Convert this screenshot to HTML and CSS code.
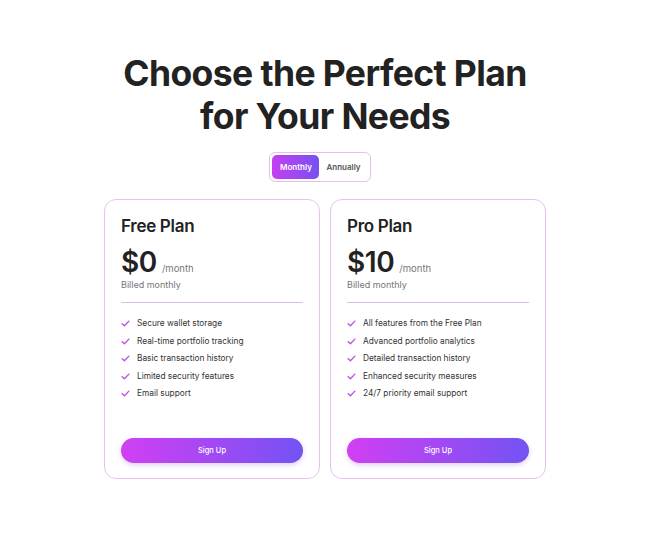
FILE: index.html
```html
<!DOCTYPE html>
<html>
<head>
<meta charset="utf-8">
<link rel="stylesheet" href="styles.css">
</head>
<body>
<main class="page">
  <h1 class="title">Choose the Perfect Plan<br>for Your Needs</h1>
  <div class="toggle">
    <span class="toggle-btn active">Monthly</span>
    <span class="toggle-btn">Annually</span>
  </div>
  <div class="cards">
    <section class="card">
      <h2 class="plan-name">Free Plan</h2>
      <div class="price-row"><span class="price">$0</span><span class="per">/month</span></div>
      <div class="billed">Billed monthly</div>
      <hr class="divider">
      <ul class="features">
        <li><svg class="check" viewBox="0 0 12 12"><path d="M1.5 6.2 L4.6 9 L10.5 2.8"/></svg>Secure wallet storage</li>
        <li><svg class="check" viewBox="0 0 12 12"><path d="M1.5 6.2 L4.6 9 L10.5 2.8"/></svg>Real-time portfolio tracking</li>
        <li><svg class="check" viewBox="0 0 12 12"><path d="M1.5 6.2 L4.6 9 L10.5 2.8"/></svg>Basic transaction history</li>
        <li><svg class="check" viewBox="0 0 12 12"><path d="M1.5 6.2 L4.6 9 L10.5 2.8"/></svg>Limited security features</li>
        <li><svg class="check" viewBox="0 0 12 12"><path d="M1.5 6.2 L4.6 9 L10.5 2.8"/></svg>Email support</li>
      </ul>
      <button class="signup">Sign Up</button>
    </section>
    <section class="card">
      <h2 class="plan-name">Pro Plan</h2>
      <div class="price-row"><span class="price">$10</span><span class="per">/month</span></div>
      <div class="billed">Billed monthly</div>
      <hr class="divider">
      <ul class="features">
        <li><svg class="check" viewBox="0 0 12 12"><path d="M1.5 6.2 L4.6 9 L10.5 2.8"/></svg>All features from the Free Plan</li>
        <li><svg class="check" viewBox="0 0 12 12"><path d="M1.5 6.2 L4.6 9 L10.5 2.8"/></svg>Advanced portfolio analytics</li>
        <li><svg class="check" viewBox="0 0 12 12"><path d="M1.5 6.2 L4.6 9 L10.5 2.8"/></svg>Detailed transaction history</li>
        <li><svg class="check" viewBox="0 0 12 12"><path d="M1.5 6.2 L4.6 9 L10.5 2.8"/></svg>Enhanced security measures</li>
        <li><svg class="check" viewBox="0 0 12 12"><path d="M1.5 6.2 L4.6 9 L10.5 2.8"/></svg>24/7 priority email support</li>
      </ul>
      <button class="signup">Sign Up</button>
    </section>
  </div>
</main>
</body>
</html>
```

FILE: styles.css
```css
html, body {
  margin: 0;
  padding: 0;
  background: #ffffff;
}
body {
  font-family: Inter, "Noto Sans", sans-serif;
  color: #222222;
}
.page {
  display: flex;
  flex-direction: column;
  align-items: center;
  padding-top: 52px;
}
.title {
  margin: 0;
  font-size: 35.5px;
  line-height: 43px;
  font-weight: 700;
  letter-spacing: -0.6px;
  text-align: center;
  color: #222222;
}
.toggle {
  margin-top: 14px;
  margin-right: 10px;
  display: flex;
  gap: 0;
  padding: 2px;
  border: 1px solid #e6bdee;
  border-radius: 6px;
  background: #fff;
}
.toggle-btn {
  display: flex;
  align-items: center;
  justify-content: center;
  height: 24px;
  padding: 0 7px;
  font-size: 8px;
  font-weight: 600;
  color: #555;
  border-radius: 5px;
}
.toggle-btn.active {
  background: linear-gradient(90deg, #c53ff2, #7552f2);
  color: #fff;
  width: 33px;
}
.cards {
  margin-top: 17px;
  display: flex;
  gap: 10px;
}
.card {
  width: 182px;
  height: 247px;
  padding: 16px 16px 15px 16px;
  border: 1px solid #e3c3ec;
  border-radius: 12px;
  display: flex;
  flex-direction: column;
  background: #fff;
}
.plan-name {
  margin: 0;
  font-size: 17px;
  line-height: 20px;
  font-weight: 600;
  letter-spacing: -0.3px;
  color: #222;
}
.price-row {
  margin-top: 9px;
  display: flex;
  align-items: baseline;
  gap: 5px;
}
.price {
  font-size: 28px;
  line-height: 34px;
  font-weight: 600;
  letter-spacing: -0.4px;
  color: #222;
}
.per {
  font-size: 9.5px;
  color: #777;
}
.billed {
  margin-top: 0;
  font-size: 9px;
  color: #777;
}
.divider {
  margin: 12px 0 0 0;
  border: 0;
  border-top: 1px solid #d9bde6;
}
.features {
  list-style: none;
  margin: 15px 0 0 0;
  padding: 0;
  display: flex;
  flex-direction: column;
  gap: 6.5px;
}
.features li {
  display: flex;
  align-items: center;
  gap: 7px;
  font-size: 8.3px;
  line-height: 11px;
  color: #333;
}
.check {
  width: 9px;
  height: 9px;
  fill: none;
  stroke: #c04fe0;
  stroke-width: 1.8;
  stroke-linecap: round;
  stroke-linejoin: round;
}
.signup {
  margin-top: auto;
  height: 25px;
  border: 0;
  border-radius: 13px;
  background: linear-gradient(90deg, #d13ff3, #7353f3);
  color: #fff;
  font-family: Inter, "Noto Sans", sans-serif;
  font-size: 7.5px;
  font-weight: 500;
  box-shadow: 0 2px 5px rgba(120, 70, 200, 0.25);
}
```
